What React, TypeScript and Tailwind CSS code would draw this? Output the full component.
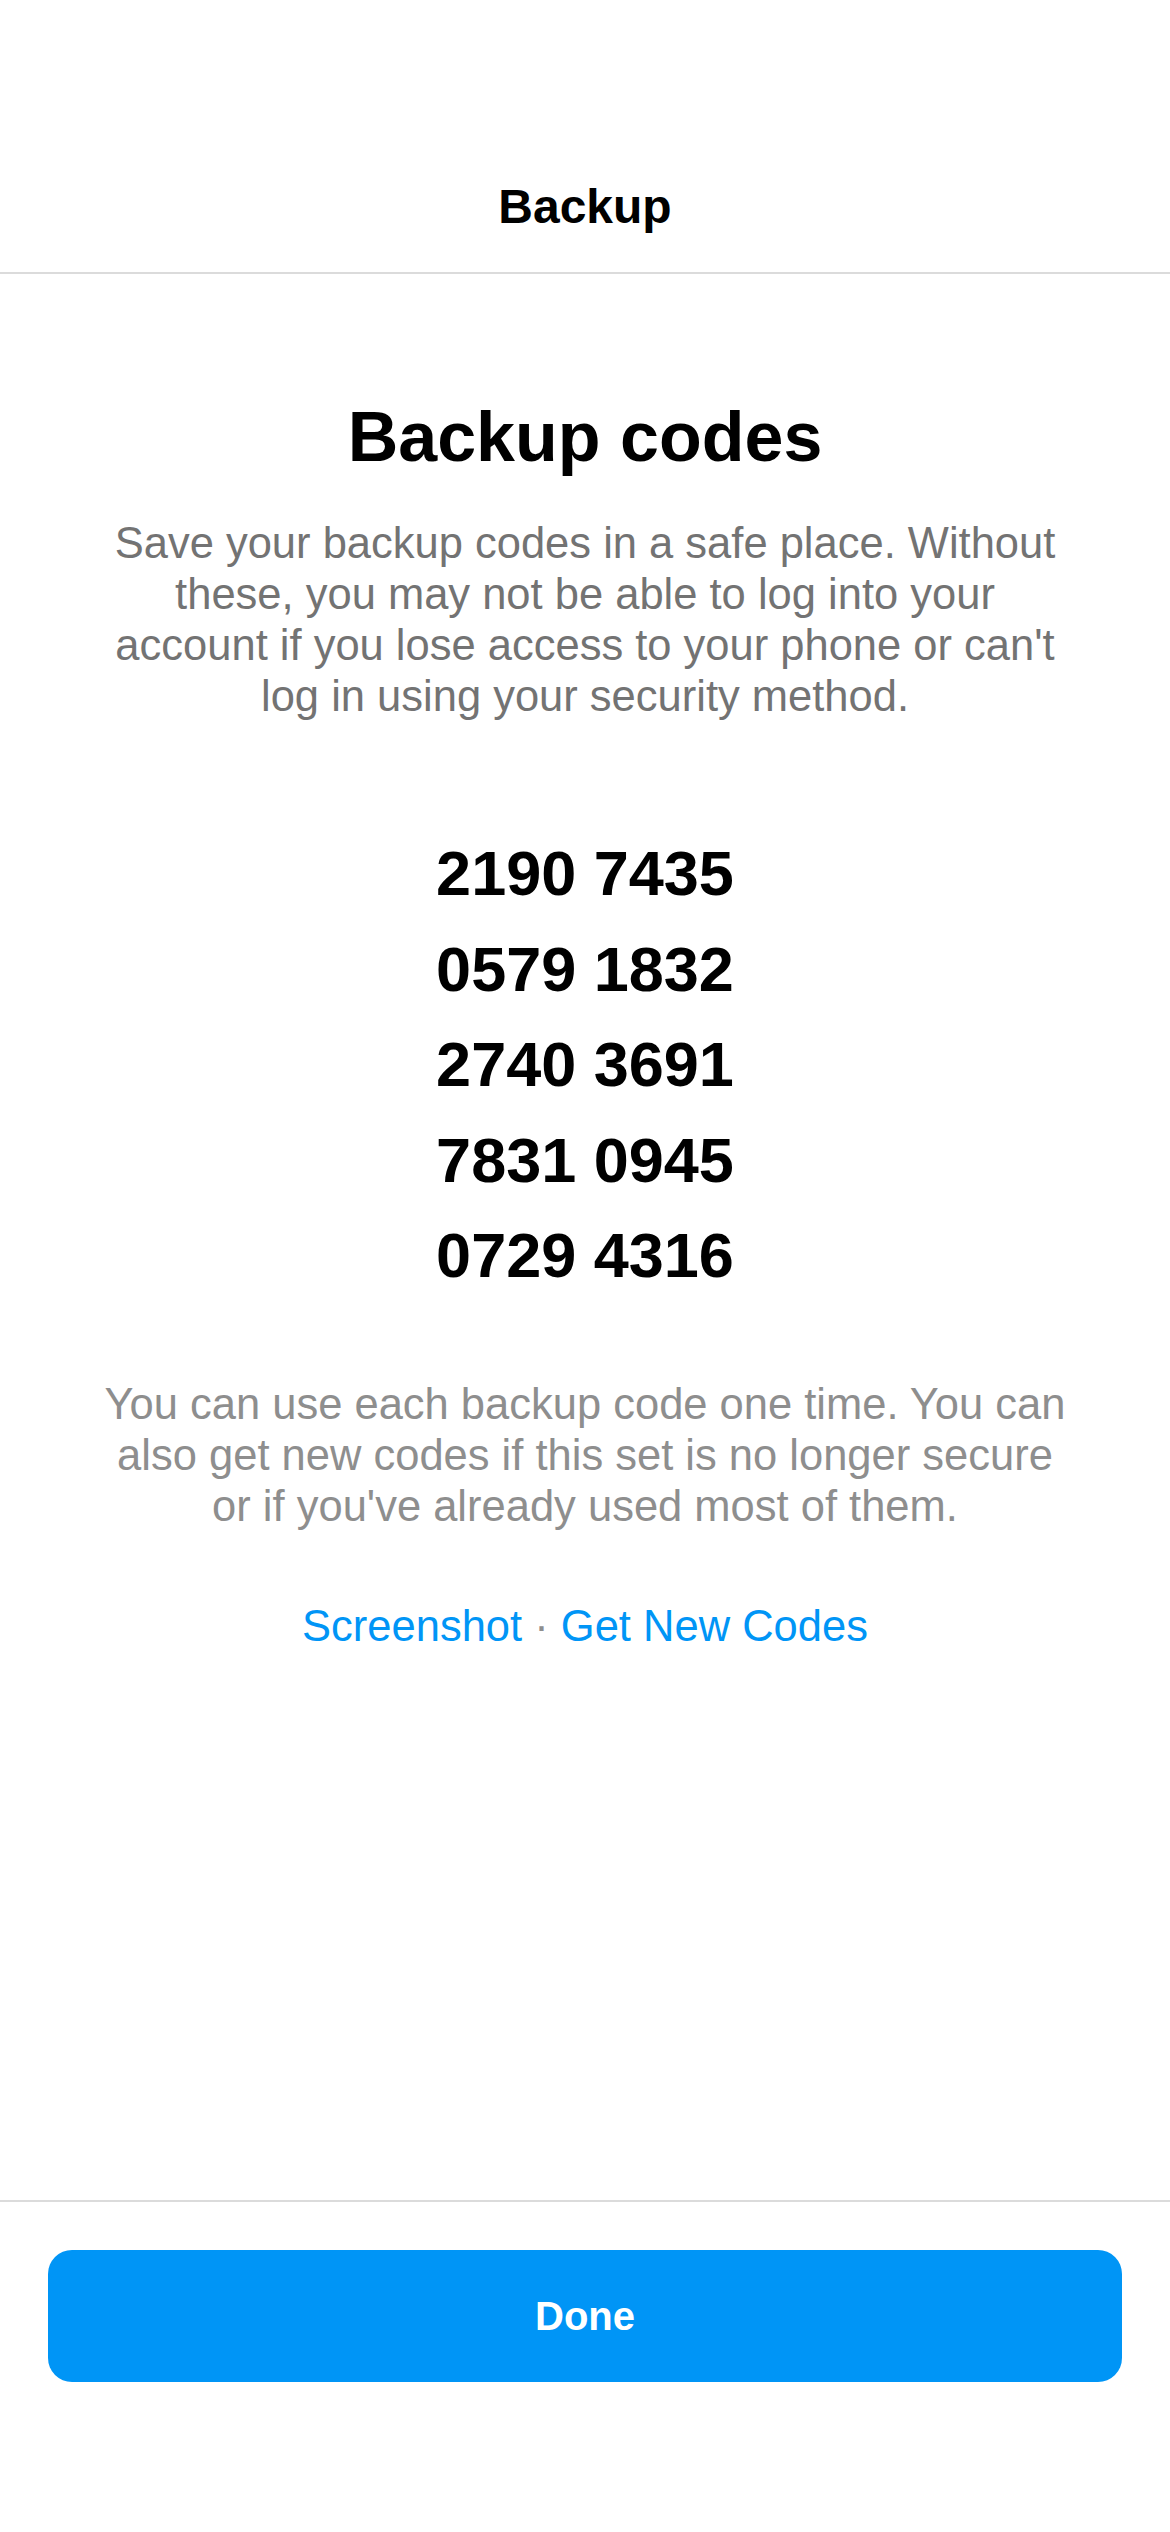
const codes = ['2190 7435', '0579 1832', '2740 3691', '7831 0945', '0729 4316'];

export default function App() {
  return (
    <div className="flex h-[2532px] w-full flex-col bg-white font-['Liberation_Sans',Arial,sans-serif] text-black">
      {/* status bar space */}
      <div className="h-[142px] shrink-0" />

      {/* Header */}
      <div className="flex h-[132px] shrink-0 items-center justify-center border-b-2 border-[#dbdbdb]">
        <h1 className="text-[48px] font-bold leading-none">Backup</h1>
      </div>

      {/* Content */}
      <div className="flex flex-1 flex-col items-center px-[60px] text-center">
        <h2 className="mt-[123px] text-[70px] font-bold leading-[80px]">Backup codes</h2>
        <p className="mt-[41px] text-[43.5px] leading-[51px] text-[#737373]">
          Save your backup codes in a safe place. Without
          <br />
          these, you may not be able to log into your
          <br />
          account if you lose access to your phone or can't
          <br />
          log in using your security method.
        </p>

        <div className="mt-[104px] flex flex-col">
          {codes.map((c) => (
            <div key={c} className="text-[63px] font-bold leading-[95.5px]">
              {c}
            </div>
          ))}
        </div>

        <p className="mt-[75px] text-[43.5px] leading-[51px] text-[#8e8e8e]">
          You can use each backup code one time. You can
          <br />
          also get new codes if this set is no longer secure
          <br />
          or if you've already used most of them.
        </p>

        <div className="mt-[69px] text-[43.5px] leading-[51px]">
          <span className="text-[#0095f6]">Screenshot</span>
          <span className="text-[#8e8e8e]"> · </span>
          <span className="text-[#0095f6]">Get New Codes</span>
        </div>
      </div>

      {/* Footer */}
      <div className="shrink-0 border-t-2 border-[#dbdbdb] px-[48px] pt-[48px] pb-[150px]">
        <button className="flex h-[132px] w-full items-center justify-center rounded-[24px] bg-[#0095f6] text-[40px] font-bold text-white">
          Done
        </button>
      </div>
    </div>
  );
}
